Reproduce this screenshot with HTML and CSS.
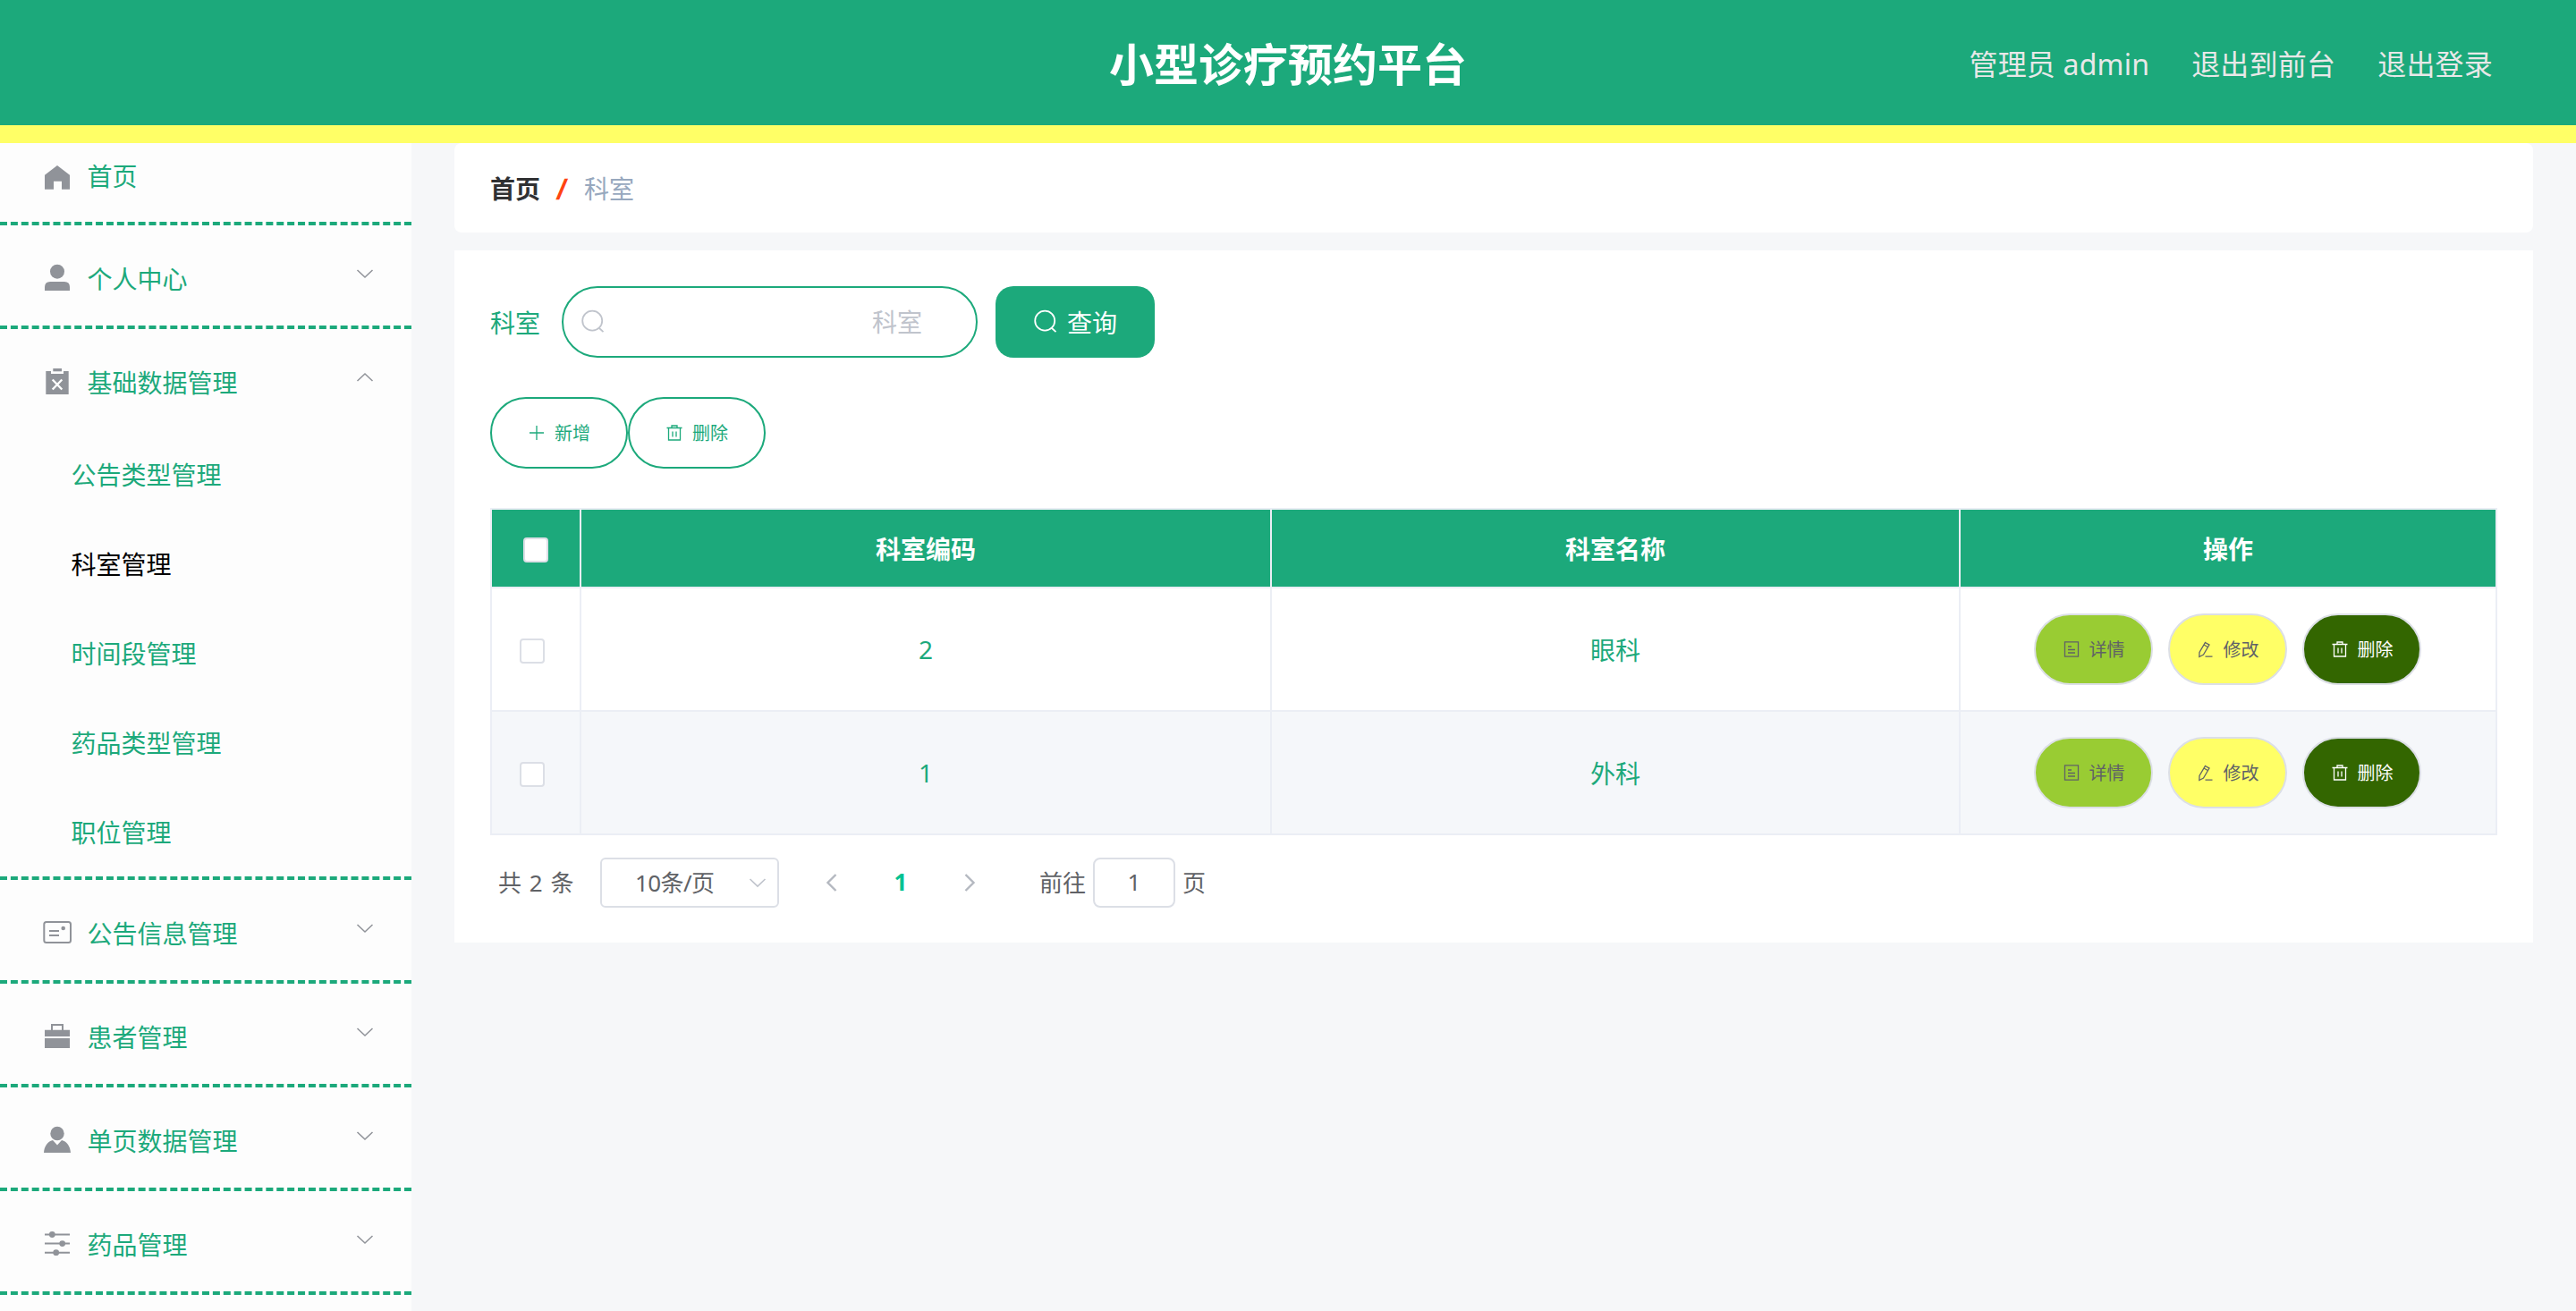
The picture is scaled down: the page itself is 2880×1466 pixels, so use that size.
FILE: index.html
```html
<!DOCTYPE html>
<html lang="zh-CN">
<head>
    <meta charset="UTF-8">
    <meta name="viewport" content="width=device-width, initial-scale=1.0">
    <title>小型诊疗预约平台</title>
    <link rel="stylesheet" href="styles.css">
</head>
<body>

<!-- shared icons -->
<svg class="sprite">
    <symbol id="arrow-down" viewBox="0 0 24 24"><path d="M3.5 8 L12 16 L20.5 8"/></symbol>
    <symbol id="arrow-up" viewBox="0 0 24 24"><path d="M3.5 16 L12 8 L20.5 16"/></symbol>
    <symbol id="search" viewBox="0 0 28 28"><circle cx="13.2" cy="12.7" r="11"/><path d="M20.5 20.5 L25.5 25.2"/></symbol>
    <symbol id="plus" viewBox="0 0 20 20"><path d="M10 2v16M2 10h16"/></symbol>
    <symbol id="trash" viewBox="0 0 20 20"><path d="M1.5 4.5h17M3.5 4.5v13.5h13V4.5M7 4.5V2h6v2.500M8 8.500v6M12 8.500v6"/></symbol>
    <symbol id="document" viewBox="0 0 20 20"><path d="M2.500 1.800h15v16.400h-15zM6 7h4M6 10.500h8M6 14h8"/></symbol>
    <symbol id="edit" viewBox="0 0 20 20"><path d="M9.500 2.500l4.500 2.600-6.500 11-4.700 2.400.2-5zM8 5l4.600 2.700M9.500 18.200h8"/></symbol>
</svg>

<header class="header">
    <h1 class="title">小型诊疗预约平台</h1>
    <div class="user-menu">
        <span>管理员 admin</span>
        <span>退出到前台</span>
        <span>退出登录</span>
    </div>
</header>

<div class="container">
    <aside class="sidebar">
        <div class="menu-item home">
            <svg class="menu-icon" viewBox="0 0 48 48"><path d="M24 10 L38 20.700 V36.700 H29 V27.700 H20 V36.700 H10 V20.700 Z"/></svg>
            <span>首页</span>
        </div>
        <div class="menu-item">
            <svg class="menu-icon" viewBox="0 0 48 48"><circle cx="24" cy="19.700" r="8"/><path d="M10 41 V37 Q10 31 16 31 H32 Q38 31 38 37 V41 Z"/></svg>
            <span>个人中心</span>
            <svg class="arrow"><use href="#arrow-down"/></svg>
        </div>
        <div class="menu-group">
            <div class="menu-title">
                <svg class="menu-icon" viewBox="0 0 48 48">
                    <path d="M11.300 15 H17 V18 H31 V15 H36.700 V41 H11.300 Z"/>
                    <path d="M19.300 12 H29 V15.300 H19.300 Z"/>
                    <path class="cross" d="M18.700 24.500 L29.300 35.500 M29.300 24.500 L18.700 35.500"/>
                </svg>
                <span>基础数据管理</span>
                <svg class="arrow"><use href="#arrow-up"/></svg>
            </div>
            <div class="submenu-item">公告类型管理</div>
            <div class="submenu-item active">科室管理</div>
            <div class="submenu-item">时间段管理</div>
            <div class="submenu-item">药品类型管理</div>
            <div class="submenu-item">职位管理</div>
        </div>
        <div class="menu-item">
            <svg class="menu-icon line" viewBox="0 0 48 48"><rect x="9.300" y="15" width="29.700" height="23" rx="2.500"/><path d="M15 25 H26 M15 30 H26"/><circle class="dot" cx="30.700" cy="22" r="2.300"/></svg>
            <span>公告信息管理</span>
            <svg class="arrow"><use href="#arrow-down"/></svg>
        </div>
        <div class="menu-item">
            <svg class="menu-icon" viewBox="0 0 48 48"><path d="M10 19.700 H17 V13 H31 V19.700 H38 V27 H10 Z M19 15 V19.700 H29 V15 Z" fill-rule="evenodd"/><path d="M10 29 H38 V40 H10 Z"/></svg>
            <span>患者管理</span>
            <svg class="arrow"><use href="#arrow-down"/></svg>
        </div>
        <div class="menu-item">
            <svg class="menu-icon" viewBox="0 0 48 48"><circle cx="24" cy="19.500" r="7.700"/><path d="M9 41 C9.500 34 13 28.500 19 27 L24 32.500 L29 27 C35 28.500 38.500 34 39 41 Z"/></svg>
            <span>单页数据管理</span>
            <svg class="arrow"><use href="#arrow-down"/></svg>
        </div>
        <div class="menu-item">
            <svg class="menu-icon line" viewBox="0 0 48 48"><path d="M10 16.500 H38 M10 26.600 H38 M10 36.700 H38"/><circle class="dot" cx="18.300" cy="16.500" r="3.400"/><circle class="dot" cx="29.700" cy="26.600" r="3.400"/><circle class="dot" cx="22.700" cy="36.700" r="3.400"/></svg>
            <span>药品管理</span>
            <svg class="arrow"><use href="#arrow-down"/></svg>
        </div>
    </aside>

    <main class="main">
        <div class="breadcrumb">
            <b>首页</b>
            <i>/</i>
            <span>科室</span>
        </div>

        <div class="card">
            <form class="search-form">
                <label for="keshi">科室</label>
                <div class="input-box">
                    <svg class="icon-search"><use href="#search"/></svg>
                    <input type="text" id="keshi" placeholder="科室">
                </div>
                <button type="button" class="btn-search"><svg class="icon-search"><use href="#search"/></svg>查询</button>
            </form>

            <div class="actions">
                <button class="btn btn-plain"><svg class="icon"><use href="#plus"/></svg><span>新增</span></button>
                <button class="btn btn-plain"><svg class="icon"><use href="#trash"/></svg><span>删除</span></button>
            </div>

            <table class="table">
                <colgroup>
                    <col class="col-check">
                    <col class="col-code">
                    <col class="col-name">
                    <col class="col-action">
                </colgroup>
                <thead>
                    <tr>
                        <th><span class="checkbox"></span></th>
                        <th>科室编码</th>
                        <th>科室名称</th>
                        <th>操作</th>
                    </tr>
                </thead>
                <tbody>
                    <tr>
                        <td><span class="checkbox"></span></td>
                        <td>2</td>
                        <td>眼科</td>
                        <td>
                            <div class="row-actions">
                                <button class="btn btn-detail"><svg class="icon"><use href="#document"/></svg><span>详情</span></button>
                                <button class="btn btn-edit"><svg class="icon"><use href="#edit"/></svg><span>修改</span></button>
                                <button class="btn btn-delete"><svg class="icon"><use href="#trash"/></svg><span>删除</span></button>
                            </div>
                        </td>
                    </tr>
                    <tr>
                        <td><span class="checkbox"></span></td>
                        <td>1</td>
                        <td>外科</td>
                        <td>
                            <div class="row-actions">
                                <button class="btn btn-detail"><svg class="icon"><use href="#document"/></svg><span>详情</span></button>
                                <button class="btn btn-edit"><svg class="icon"><use href="#edit"/></svg><span>修改</span></button>
                                <button class="btn btn-delete"><svg class="icon"><use href="#trash"/></svg><span>删除</span></button>
                            </div>
                        </td>
                    </tr>
                </tbody>
            </table>

            <div class="pagination">
                <span class="total">共 2 条</span>
                <div class="page-size"><span>10条/页</span><svg class="size-arrow"><use href="#arrow-down"/></svg></div>
                <svg class="page-arrow" viewBox="0 0 24 24"><path d="M16.500 3 L7.500 12 L16.500 21"/></svg>
                <span class="page-number">1</span>
                <svg class="page-arrow next" viewBox="0 0 24 24"><path d="M7.500 3 L16.500 12 L7.500 21"/></svg>
                <span class="jump">前往</span>
                <span class="jump-box">1</span>
                <span class="jump-unit">页</span>
            </div>
        </div>
    </main>
</div>

</body>
</html>
```
FILE: styles.css
```css
* {
    box-sizing: border-box;
}
body {
    margin: 0;
    height: 1466px;
    overflow: hidden;
    font-family: "Noto Sans", "Noto Sans CJK SC", sans-serif;
    font-size: 28px;
    color: #606266;
    background-color: #f6f7f9;
}
button, input {
    font-family: inherit;
}
svg {
    flex: none;
    fill: none;
    stroke: currentColor;
}
.sprite {
    display: none;
}

/* header */
.header {
    display: grid;
    grid-template-columns: 1fr auto 1fr;
    align-items: center;
    height: 160px;
    padding: 4px 92px 0;
    background-color: #1ca97b;
    border-bottom: 20px solid #ffff66;
}
.title {
    grid-column: 2;
    margin: 0;
    font-size: 50px;
    line-height: 60px;
    color: #fff;
}
.user-menu {
    display: flex;
    justify-content: flex-end;
    gap: 47px;
    margin-right: 1px;
    font-size: 32px;
    line-height: 40px;
    letter-spacing: 0.2px;
    color: #e8e8e8;
}

.container {
    display: flex;
    height: 1306px;
}

/* sidebar */
.sidebar {
    width: 460px;
    flex: none;
    background-color: #fdfdfd;
    color: #1ca97b;
}
.menu-item, .menu-title {
    display: flex;
    align-items: center;
    height: 112px;
    padding: 0 40px;
}
.menu-item {
    height: 116px;
}
.menu-item, .menu-group {
    border-bottom: 4px dashed #1ca97b;
}
.menu-item.home {
    height: 92px;
    padding-bottom: 11px;
}
.menu-item span, .menu-title span {
    margin-left: 9.5px;
    padding-top: 6px;
}
.menu-item.home span {
    padding: 0 0 5px;
}
.menu-icon {
    width: 48px;
    height: 48px;
    fill: #909399;
    stroke: none;
}
.menu-icon.line {
    fill: none;
    stroke: #909399;
    stroke-width: 2;
}
.menu-icon .dot {
    fill: #909399;
    stroke: none;
}
.menu-icon .cross {
    stroke: #fdfdfd;
    stroke-width: 2.4;
}
.arrow {
    width: 24px;
    height: 24px;
    margin: -4px 0 0 auto;
    color: #909399;
    stroke-width: 1.5;
}
.submenu-item {
    height: 100px;
    padding-left: 79.5px;
    line-height: 103px;
}
.submenu-item.active {
    color: #000;
}

/* content */
.main {
    flex: 1;
    padding: 0 48px;
}
.breadcrumb {
    display: flex;
    align-items: center;
    height: 100px;
    padding: 0 40px;
    border-radius: 8px;
    background-color: #fff;
}
.breadcrumb b {
    color: #303133;
}
.breadcrumb i {
    width: 49px;
    font-style: normal;
    font-weight: bold;
    text-align: center;
    color: #ff4411;
    transform: skewX(-6deg) scaleY(1.15);
}
.breadcrumb span {
    color: #97a8be;
}
.card {
    height: 774px;
    margin-top: 20px;
    padding: 40px;
    background-color: #fff;
}

.search-form {
    display: flex;
    align-items: center;
    height: 80px;
}
.search-form label {
    width: 80px;
    color: #1ca97b;
}
.input-box {
    display: flex;
    align-items: center;
    width: 465px;
    height: 80px;
    padding: 0 60px 0 19px;
    border: 2px solid #1ca97b;
    border-radius: 40px;
    color: #c0c4cc;
}
.input-box input {
    flex: 1;
    min-width: 0;
    padding: 0;
    border: none;
    outline: none;
    background: none;
    font-size: 28px;
    text-align: right;
}
.input-box input::placeholder {
    color: #c0c4cc;
}
.icon-search {
    width: 28px;
    height: 28px;
    stroke-width: 1.8;
}
.btn-search {
    display: flex;
    align-items: center;
    justify-content: center;
    gap: 10px;
    width: 178px;
    height: 80px;
    margin-left: 20px;
    padding: 0;
    border: none;
    border-radius: 20px;
    font-size: 28px;
    color: #fff;
    background-color: #1ca97b;
}

.actions {
    display: flex;
    margin: 44px 0;
}
.btn {
    display: flex;
    align-items: center;
    justify-content: center;
    gap: 10px;
    width: 133px;
    height: 80px;
    padding: 0;
    border: 2px solid #dcdfe6;
    border-radius: 40px;
    font-size: 20px;
    color: #606266;
}
.btn span {
    padding-bottom: 2px;
}
.icon {
    width: 20px;
    height: 20px;
    stroke-width: 1.3;
}
.btn-plain {
    width: 154px;
    border-color: #1ca97b;
    color: #1ca97b;
    background-color: #fff;
}
.btn-detail {
    background-color: #99cc33;
}
.btn-edit {
    background-color: #ffff66;
}
.btn-delete {
    color: #fff;
    background-color: #336600;
}

/* table */
.table {
    width: 2244px;
    table-layout: fixed;
    border-collapse: separate;
    border-spacing: 0;
    border: solid #ebeef5;
    border-width: 2px 0 0 2px;
    text-align: center;
    color: #1ca97b;
}
.col-check {
    width: 100px;
}
.col-code {
    width: 772px;
}
.col-name {
    width: 770px;
}
.col-action {
    width: 600px;
}
.table th, .table td {
    padding: 0;
    border: solid #ebeef5;
    border-width: 0 2px 2px 0;
}
.table th {
    height: 88px;
    color: #fff;
    background-color: #1ca97b;
}
.table td {
    height: 138px;
}
.table tbody tr:nth-child(2) {
    background-color: #f5f7fa;
}
.checkbox {
    display: block;
    width: 28px;
    height: 28px;
    margin: 4px auto 0 31px;
    border: 2px solid #dcdfe6;
    border-radius: 4px;
    background-color: #fff;
}
th .checkbox {
    margin-left: 35px;
}
.row-actions {
    display: flex;
    justify-content: center;
    gap: 17px;
    padding-right: 1px;
}

.pagination {
    display: flex;
    align-items: center;
    height: 56px;
    margin-top: 25px;
    padding-left: 9px;
    font-size: 26px;
}
.total {
    width: 114px;
    padding-bottom: 3px;
    word-spacing: 2px;
}
.page-size {
    display: flex;
    align-items: center;
    justify-content: space-between;
    width: 200px;
    height: 56px;
    padding: 0 10px 0 37px;
    border: 2px solid #dcdfe6;
    border-radius: 6px;
}
.page-size span {
    padding-bottom: 3px;
    letter-spacing: -0.6px;
}
.size-arrow {
    width: 24px;
    height: 24px;
    color: #c0c4cc;
    stroke-width: 1.7;
}
.page-arrow {
    width: 24px;
    height: 24px;
    margin-left: 47px;
    color: #b4b8c0;
    stroke-width: 2.4;
}
.page-arrow.next {
    margin-left: 53px;
}
.page-number {
    width: 24px;
    margin-left: 53px;
    padding-bottom: 2px;
    text-align: center;
    font-weight: bold;
    color: #00c292;
}
.jump {
    margin-left: 66px;
    padding-bottom: 3px;
}
.jump-box {
    width: 92px;
    height: 56px;
    margin: 0 8px;
    border: 2px solid #dcdfe6;
    border-radius: 8px;
    line-height: 50px;
    text-align: center;
}
.jump-unit {
    padding-bottom: 3px;
}
```
